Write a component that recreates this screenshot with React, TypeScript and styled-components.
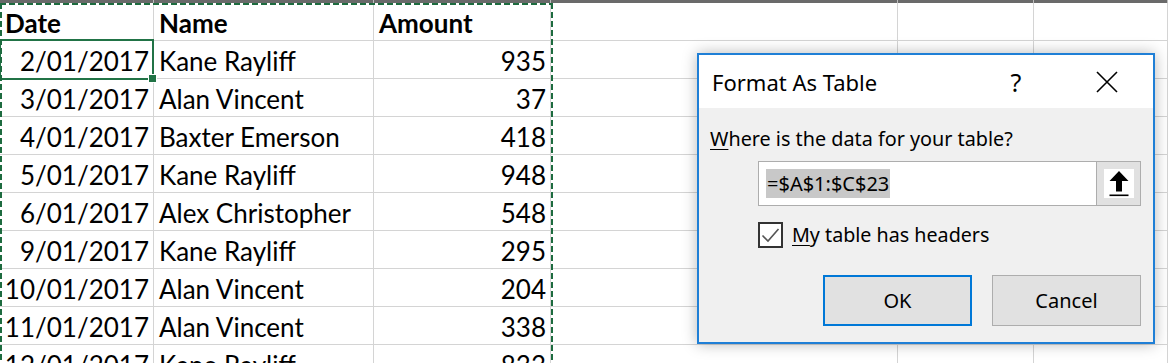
import styled, { createGlobalStyle } from "styled-components";

const GlobalStyle = createGlobalStyle`
  html, body {
    margin: 0;
    padding: 0;
    background: #ffffff;
    overflow: hidden;
  }
`;

const COLS = "154px 220px 177px 347px 136px 134px";

const rows: [string, string, string][] = [
  ["2/01/2017", "Kane Rayliff", "935"],
  ["3/01/2017", "Alan Vincent", "37"],
  ["4/01/2017", "Baxter Emerson", "418"],
  ["5/01/2017", "Kane Rayliff", "948"],
  ["6/01/2017", "Alex Christopher", "548"],
  ["9/01/2017", "Kane Rayliff", "295"],
  ["10/01/2017", "Alan Vincent", "204"],
  ["11/01/2017", "Alan Vincent", "338"],
  ["12/01/2017", "Kane Rayliff", "833"],
];

const Sheet = styled.div`
  position: relative;
  width: 1168px;
  height: 363px;
  overflow: hidden;
  font-family: Lato, "Liberation Sans", sans-serif;
  color: #000;
`;

const ColStrip = styled.div`
  display: grid;
  grid-template-columns: ${COLS};
  height: 3px;
  background: #6a6a6a;
  div {
    border-right: 1px solid #bdbdbd;
  }
`;

const Grid = styled.div`
  display: grid;
  grid-template-columns: ${COLS};
  grid-auto-rows: 38px;
`;

const Cell = styled.div<{ $right?: boolean; $bold?: boolean; $active?: boolean }>`
  position: relative;
  box-sizing: border-box;
  border-right: 1px solid #d4d4d4;
  border-bottom: 1px solid #d4d4d4;
  display: flex;
  align-items: center;
  justify-content: ${(p) => (p.$right ? "flex-end" : "flex-start")};
  padding: 2px ${(p) => (p.$right ? "4px" : "0")} 0 ${(p) => (p.$right ? "0" : "5px")};
  font-size: 26px;
  font-weight: ${(p) => (p.$bold ? 700 : 400)};
  white-space: nowrap;
  ${(p) =>
    p.$active &&
    `
    &::after {
      content: "";
      position: absolute;
      left: -1px;
      top: -2px;
      right: -1px;
      bottom: -2px;
      border: 2px solid #217346;
      pointer-events: none;
    }
    &::before {
      content: "";
      position: absolute;
      right: -4px;
      bottom: -5px;
      width: 7px;
      height: 7px;
      background: #217346;
      border: 1px solid #fff;
      z-index: 2;
    }
  `}
`;

// marching ants around the copied range A1:C23
const Ants = styled.div`
  position: absolute;
  left: 0;
  top: 3px;
  width: 553px;
  height: 400px;
  pointer-events: none;
  background:
    repeating-linear-gradient(90deg, #1d6b3f 0 6px, transparent 6px 9px) top left / 100% 2px no-repeat,
    repeating-linear-gradient(180deg, #1d6b3f 0 6px, transparent 6px 9px) top left / 2px 100% no-repeat,
    repeating-linear-gradient(180deg, #1d6b3f 0 6px, transparent 6px 9px) top right / 2px 100% no-repeat;
`;

const Dialog = styled.div`
  position: absolute;
  left: 697px;
  top: 53px;
  width: 458px;
  height: 291px;
  box-sizing: border-box;
  border: 2px solid #1f7fd6;
  background: #f0f0f0;
  box-shadow: 0 0 14px rgba(0, 0, 0, 0.28);
  display: flex;
  flex-direction: column;
  font-family: "Noto Sans", "Open Sans", sans-serif;
  color: #000;
`;

const TitleBar = styled.div`
  height: 53px;
  background: #fff;
  display: flex;
  align-items: center;
  padding-left: 13px;
`;

const Title = styled.div`
  flex: 1;
  font-size: 22px;
`;

const TitleButton = styled.div<{ $gap?: number }>`
  width: 46px;
  height: 40px;
  display: flex;
  align-items: center;
  justify-content: center;
  margin-right: ${(p) => p.$gap ?? 0}px;
  font-size: 25px;
`;

const Body = styled.div`
  flex: 1;
  padding: 17px 12px 16px 11px;
  display: flex;
  flex-direction: column;
`;

const Label = styled.div`
  font-size: 19.8px;
  height: 28px;
  line-height: 28px;
`;

const Key = styled.span`
  text-decoration: underline;
  text-underline-offset: 3px;
`;

const RangeBox = styled.div`
  margin: 8px 0 0 48px;
  height: 45px;
  box-sizing: border-box;
  border: 1px solid #adadad;
  background: #fff;
  display: flex;
  align-items: stretch;
`;

const RangeText = styled.div`
  flex: 1;
  display: flex;
  align-items: center;
  padding-left: 7px;
  span {
    background: #c8c8c8;
    font-size: 20px;
    line-height: 29px;
    padding: 0 1px;
  }
`;

const CollapseButton = styled.div`
  width: 43px;
  border-left: 1px solid #adadad;
  background: #e1e1e1;
  display: flex;
  align-items: center;
  justify-content: center;
  div {
    width: 30px;
    height: 29px;
    background: #fff;
    display: flex;
    align-items: center;
    justify-content: center;
  }
`;

const CheckRow = styled.label`
  margin: 15px 0 0 48px;
  display: flex;
  align-items: center;
  gap: 9px;
  font-size: 19.7px;
`;

const CheckBox = styled.div`
  width: 25px;
  height: 26px;
  box-sizing: border-box;
  border: 2px solid #333;
  background: #fff;
  display: flex;
  align-items: center;
  justify-content: center;
`;

const Buttons = styled.div`
  margin-top: auto;
  display: flex;
  justify-content: flex-end;
  gap: 20px;
`;

const Button = styled.div<{ $primary?: boolean }>`
  width: 149px;
  height: 51px;
  box-sizing: border-box;
  background: #e1e1e1;
  border: ${(p) => (p.$primary ? "2px solid #0078d7" : "1px solid #adadad")};
  display: flex;
  align-items: center;
  justify-content: center;
  font-size: 20px;
`;

export default function App() {
  return (
    <Sheet>
      <GlobalStyle />
      <ColStrip>
        {Array.from({ length: 6 }).map((_, i) => (
          <div key={i} />
        ))}
      </ColStrip>
      <Grid>
        <Cell $bold>Date</Cell>
        <Cell $bold>Name</Cell>
        <Cell $bold>Amount</Cell>
        <Cell />
        <Cell />
        <Cell />
        {rows.map((r, i) => (
          <>
            <Cell key={"d" + i} $right $active={i === 0}>
              {r[0]}
            </Cell>
            <Cell key={"n" + i}>{r[1]}</Cell>
            <Cell key={"a" + i} $right>
              {r[2]}
            </Cell>
            <Cell key={"x" + i} />
            <Cell key={"y" + i} />
            <Cell key={"z" + i} />
          </>
        ))}
      </Grid>
      <Ants />

      <Dialog>
        <TitleBar>
          <Title>Format As Table</Title>
          <TitleButton $gap={45}>?</TitleButton>
          <TitleButton $gap={23}>
            <svg width="22" height="22" viewBox="0 0 22 22">
              <path d="M1 1 L21 21 M21 1 L1 21" stroke="#000" strokeWidth="1.6" />
            </svg>
          </TitleButton>
        </TitleBar>
        <Body>
          <Label>
            <Key>W</Key>here is the data for your table?
          </Label>
          <RangeBox>
            <RangeText>
              <span>=$A$1:$C$23</span>
            </RangeText>
            <CollapseButton>
              <div>
                <svg width="22" height="27" viewBox="0 0 22 27">
                  <path d="M11 1 L20.5 11 L14 11 L14 21.5 L8 21.5 L8 11 L1.5 11 Z" fill="#000" />
                  <rect x="1.5" y="24.5" width="19" height="1.6" fill="#000" />
                </svg>
              </div>
            </CollapseButton>
          </RangeBox>
          <CheckRow>
            <CheckBox>
              <svg width="19" height="16" viewBox="0 0 19 16">
                <path d="M1.5 8.5 L7 14 L17.5 2" fill="none" stroke="#555" strokeWidth="1.6" />
              </svg>
            </CheckBox>
            <span>
              <Key>M</Key>y table has headers
            </span>
          </CheckRow>
          <Buttons>
            <Button $primary>OK</Button>
            <Button>Cancel</Button>
          </Buttons>
        </Body>
      </Dialog>
    </Sheet>
  );
}
